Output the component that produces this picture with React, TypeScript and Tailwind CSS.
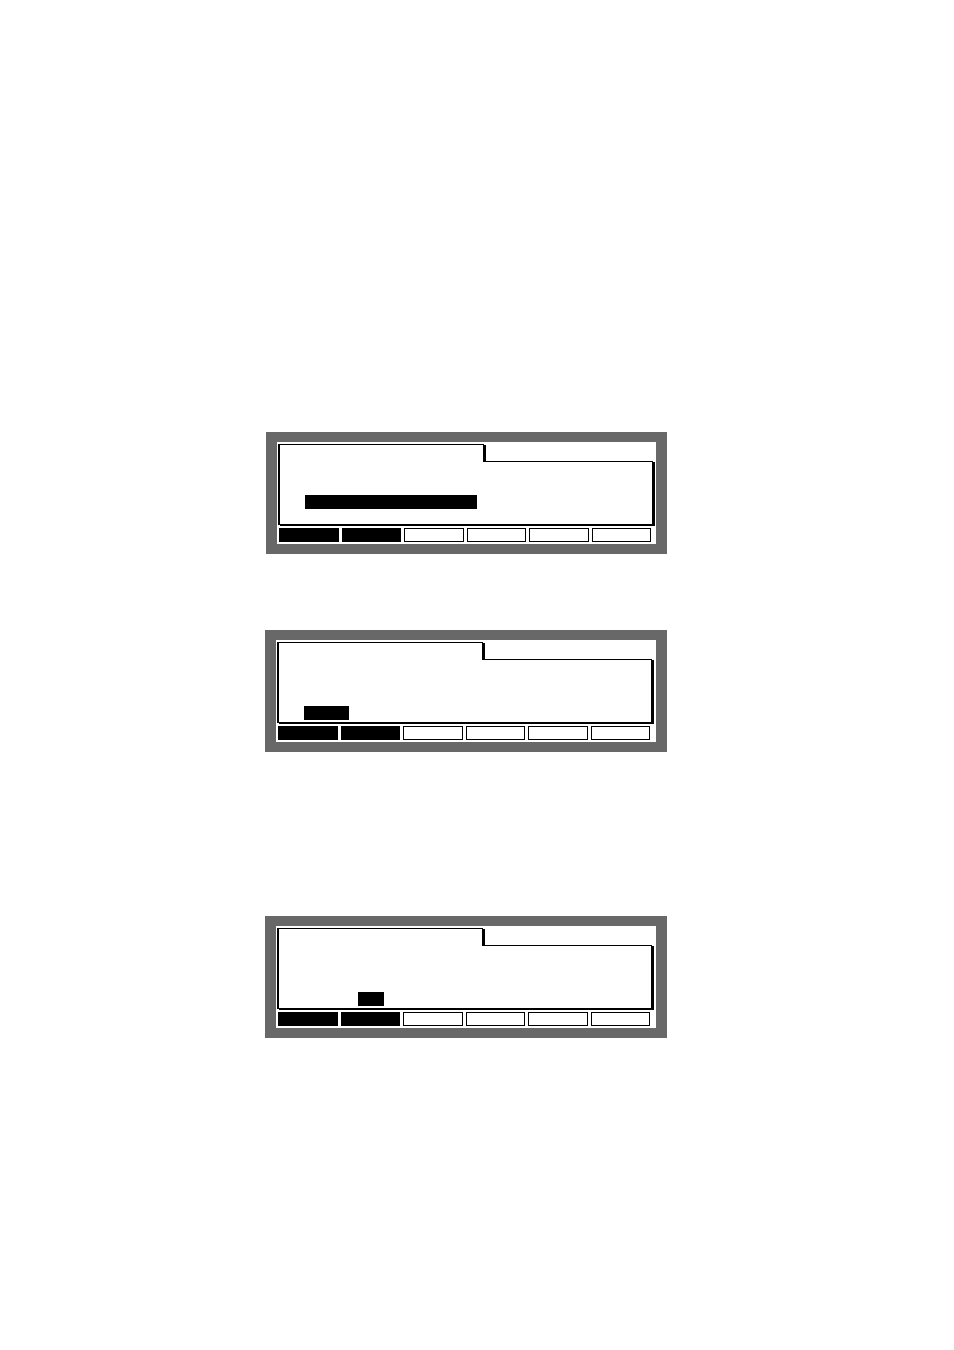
import React from "react";

type ScreenProps = {
  left: number;
  width: number;
  barPadTop: string;
  barPadLeft: string;
  barWidth: string;
  className?: string;
};

function Panel({ barPadTop, barPadLeft, barWidth }: { barPadTop: string; barPadLeft: string; barWidth: string }) {
  return (
    <div className="w-[375px] [filter:drop-shadow(2px_1px_0_#000)]">
      <div className="w-[206px] h-[17px] bg-white border-l-2 border-t border-r border-black" />
      <div className="h-[64px] bg-white border-l-2 border-r border-b border-black flex flex-col">
        <div className="flex h-px shrink-0">
          <div className="w-[203px]" />
          <div className="flex-1 bg-black" />
        </div>
        <div className={`${barPadTop} ${barPadLeft}`}>
          <div className={`${barWidth} h-[14px] bg-black`} />
        </div>
      </div>
    </div>
  );
}

function SoftKeys() {
  return (
    <div className="grid grid-cols-6 gap-[3px] w-[372px] h-[14px] ml-[1px] mt-[3px]">
      <div className="bg-black" />
      <div className="bg-black" />
      <div className="bg-white border border-black" />
      <div className="bg-white border border-black" />
      <div className="bg-white border border-black" />
      <div className="bg-white border border-black" />
    </div>
  );
}

function Screen({ children, className }: { children: React.ReactNode; className: string }) {
  return (
    <div className={`${className} h-[122px] border-x-[11px] border-y-[10px] border-[#686868] bg-white`}>
      <div className="pl-[1px] pt-[2px]">{children}</div>
    </div>
  );
}

export default function App() {
  return (
    <div
      className="w-[954px] h-[1350px] bg-white flex flex-col pt-[432px]"
      style={{ fontFamily: '"Liberation Sans", Arial, sans-serif' }}
    >
      <Screen className="ml-[266px] w-[401px]">
        <Panel barPadTop="pt-[33px]" barPadLeft="pl-[25px]" barWidth="w-[172px]" />
        <SoftKeys />
      </Screen>
      <Screen className="ml-[265px] w-[402px] mt-[76px]">
        <Panel barPadTop="pt-[46px]" barPadLeft="pl-[25px]" barWidth="w-[45px]" />
        <SoftKeys />
      </Screen>
      <Screen className="ml-[265px] w-[402px] mt-[164px]">
        <Panel barPadTop="pt-[46px]" barPadLeft="pl-[79px]" barWidth="w-[26px]" />
        <SoftKeys />
      </Screen>
    </div>
  );
}
